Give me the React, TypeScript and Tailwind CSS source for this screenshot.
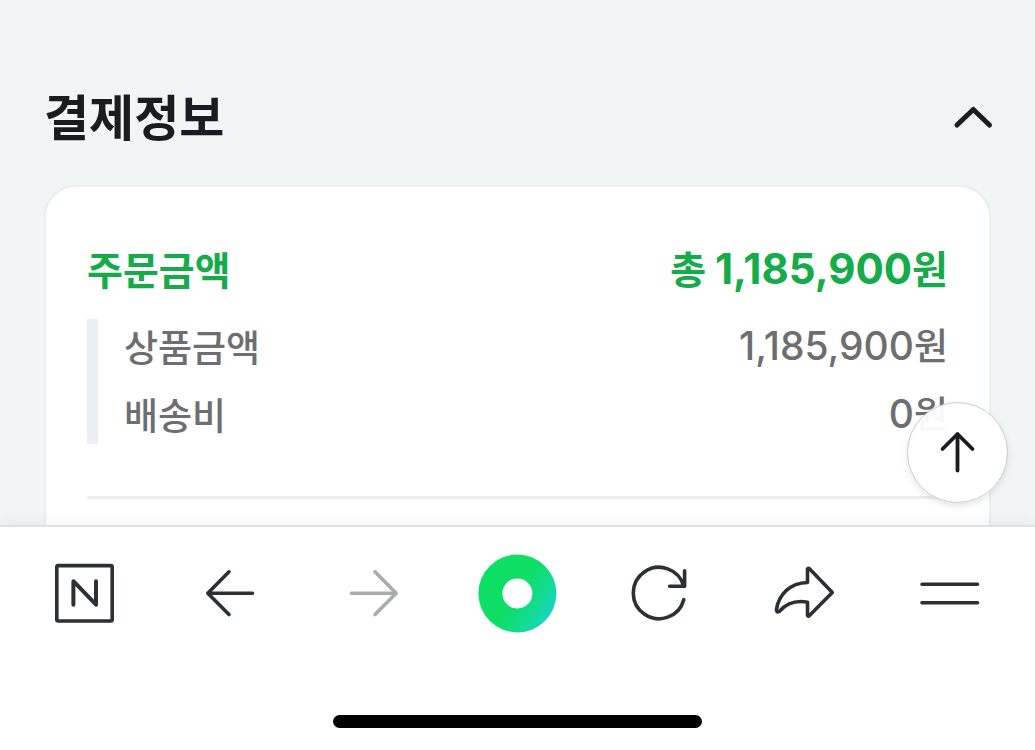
import React, { useState } from 'react';
import { clsx } from 'clsx';

interface PriceProps {
  amount: number;
  prefix?: string;
  bold?: boolean;
}

interface NavItem {
  label: string;
  icon: React.ReactNode;
  disabled?: boolean;
}

const orderItems = [
  { label: '상품금액', amount: 1185900 },
  { label: '배송비', amount: 0 },
];

function Price({ amount, prefix, bold = false }: PriceProps) {
  return (
    <span className="whitespace-nowrap">
      {prefix && `${prefix} `}
      <span className={clsx("font-['Inter',sans-serif]", bold ? 'text-[42px]' : 'text-[39px]')}>
        {amount.toLocaleString('en-US')}
      </span>
      원
    </span>
  );
}

function NavIcon({ children }: { children: React.ReactNode }) {
  return (
    <svg
      viewBox="0 0 80 80"
      className="size-20"
      fill="none"
      stroke="currentColor"
      strokeWidth="3.6"
      strokeLinecap="round"
      strokeLinejoin="round"
      aria-hidden="true"
    >
      {children}
    </svg>
  );
}

const navItems: NavItem[] = [
  {
    label: '네이버 홈',
    icon: (
      <NavIcon>
        <rect x="11.8" y="11.6" width="55.4" height="55.4" rx="1.5" />
        <path d="M28.4 50.7V27.2L51 50.7V27.2" strokeWidth="4" />
      </NavIcon>
    ),
  },
  {
    label: '뒤로',
    icon: (
      <NavIcon>
        <path d="M63.5 39.2H19M40 17.8 18.8 39.2 40 60.5" />
      </NavIcon>
    ),
  },
  {
    label: '앞으로',
    disabled: true,
    icon: (
      <NavIcon>
        <path d="M18.5 39.2H63M42 17.8 63.2 39.2 42 60.5" />
      </NavIcon>
    ),
  },
  {
    label: '그린닷',
    icon: (
      <NavIcon>
        <defs>
          <linearGradient id="dot" x1="0.1" y1="0.2" x2="0.97" y2="0.73">
            <stop offset="0.45" stopColor="#0cdf63" />
            <stop offset="0.75" stopColor="#12dc8e" />
            <stop offset="1" stopColor="#18d4c8" />
          </linearGradient>
        </defs>
        <circle cx="40.4" cy="39.5" r="39" fill="url(#dot)" stroke="none" />
        <circle cx="40.4" cy="39.5" r="15" fill="#fff" stroke="none" />
      </NavIcon>
    ),
  },
  {
    label: '새로고침',
    icon: (
      <NavIcon>
        <path d="M61.8 45.7A25.7 25.7 0 1 1 61.8 32.3" />
        <path d="M62.6 16.8V32.3H47.6" />
      </NavIcon>
    ),
  },
  {
    label: '공유',
    icon: (
      <NavIcon>
        <path d="M41.5 28.5V15.2Q42 13.4 43.5 14.8L66.3 38.4 43.5 61.5Q42 63 41.5 61.2V48.2C28 45.7 20 50 13.5 57.2Q10.6 59 10.4 56C12.5 40.5 24 29 41.5 28.5Z" />
      </NavIcon>
    ),
  },
  {
    label: '메뉴',
    icon: (
      <NavIcon>
        <path d="M12 30.2H67.5M12 48.8H67.5" />
      </NavIcon>
    ),
  },
];

function PaymentInfo() {
  const [open, setOpen] = useState(true);

  return (
    <section className="px-11 pt-20">
      <header className="flex h-[70px] items-end justify-between">
        <h2 className="text-[49px] leading-[70px] font-bold text-[#1b1b22]">결제정보</h2>
        <button
          type="button"
          aria-label="결제정보 접기"
          aria-expanded={open}
          onClick={() => setOpen(!open)}
          className="-mr-3 flex size-[60px] items-center justify-center text-[#1b1b22]"
        >
          <svg
            viewBox="0 0 60 60"
            className={clsx('size-[60px]', !open && 'rotate-180')}
            fill="none"
            stroke="currentColor"
            strokeWidth="5"
            strokeLinecap="round"
            strokeLinejoin="round"
            aria-hidden="true"
          >
            <path d="M14 35 30.3 19.5 46.5 35" />
          </svg>
        </button>
      </header>

      {open && (
        <div className="mt-[35px] rounded-[32px] border-2 border-[#e9eef0] bg-white px-[41px] pt-[51px] pb-20">
          <div className="flex h-[60px] items-center justify-between text-[39px] font-bold text-[#14ab49]">
            <h3>주문금액</h3>
            <Price amount={1185900} prefix="총" bold />
          </div>
          <dl className="mt-[21px] flex flex-col gap-[13px] border-l-[11px] border-[#ebeef2] pb-0.5 pl-[26px] text-[37px] font-medium text-[#6e6e70]">
            {orderItems.map((item) => (
              <div key={item.label} className="flex h-[55px] items-center justify-between">
                <dt>{item.label}</dt>
                <dd>
                  <Price amount={item.amount} />
                </dd>
              </div>
            ))}
          </dl>
          <hr className="mt-[52px] border-t-[3px] border-[#ebeef0]" />
        </div>
      )}
    </section>
  );
}

export default function App() {
  return (
    <div className="flex h-screen flex-col overflow-hidden bg-[#f1f5f6] font-['Noto_Sans_CJK_KR',sans-serif]">
      <div className="relative min-h-0 flex-1">
        <main className="h-full overflow-hidden">
          <PaymentInfo />
        </main>
        <button
          type="button"
          aria-label="맨 위로"
          className="absolute right-[27px] bottom-[22px] flex size-[101px] items-center justify-center rounded-full border border-[#c9c9cc] bg-white/95 text-[#1b1b22] shadow-[0_3px_6px_rgba(0,0,0,0.1)]"
        >
          <svg
            viewBox="0 0 60 60"
            className="size-[60px]"
            fill="none"
            stroke="currentColor"
            strokeWidth="3.8"
            strokeLinecap="round"
            strokeLinejoin="round"
            aria-hidden="true"
          >
            <path d="M29.5 47.5V11M14.5 26 29.5 11 44.5 26" />
          </svg>
        </button>
      </div>

      <nav className="relative border-t-2 border-[#dfe2e5] bg-white px-[45px] pt-[27px] pb-[22px] shadow-[0_-2px_16px_rgba(0,0,0,0.06)]">
        <div className="flex items-center justify-between">
          {navItems.map((item) => (
            <button
              key={item.label}
              type="button"
              aria-label={item.label}
              disabled={item.disabled}
              className={item.disabled ? 'text-[#a9abad]' : 'text-[#2b3036]'}
            >
              {item.icon}
            </button>
          ))}
        </div>
        <div className="mx-auto mt-[81px] h-[13px] w-[369px] rounded-full bg-black" />
      </nav>
    </div>
  );
}
